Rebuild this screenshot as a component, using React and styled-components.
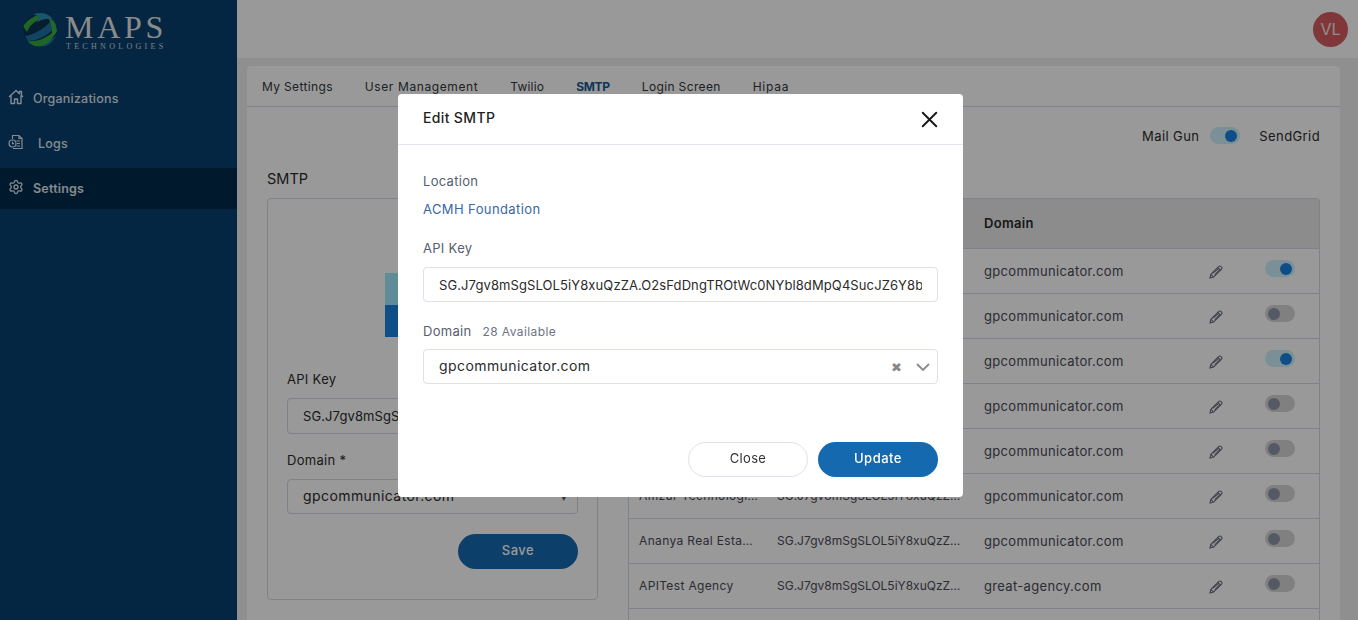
import React from "react";
import styled, { createGlobalStyle } from "styled-components";
import { Settings, X } from "lucide-react";

const API_KEY = "SG.J7gv8mSgSLOL5iY8xuQzZA.O2sFdDngTROtWc0NYbl8dMpQ4SucJZ6Y8bXk2";
const SHORT_KEY = "SG.J7gv8mSgSLOL5iY8xuQzZ…";
const TABS = [
  { label: "My Settings", spacing: 0.35 },
  { label: "User Management", spacing: 0.6 },
  { label: "Twilio", spacing: 0.2 },
  { label: "SMTP", spacing: -0.3 },
  { label: "Login Screen", spacing: 0.35 },
  { label: "Hipaa", spacing: 0.75 },
];
const ROWS = [
  { name: "", domain: "gpcommunicator.com", on: true },
  { name: "", domain: "gpcommunicator.com", on: false },
  { name: "", domain: "gpcommunicator.com", on: true },
  { name: "", domain: "gpcommunicator.com", on: false },
  { name: "", domain: "gpcommunicator.com", on: false },
  { name: "Amzur Technologi…", domain: "gpcommunicator.com", on: false },
  { name: "Ananya Real Esta…", domain: "gpcommunicator.com", on: false },
  { name: "APITest Agency", domain: "great-agency.com", on: false },
];

export default function App() {
  return (
    <>
      <GlobalStyle />
      <Shell>
        <Sidebar>
          <Logo>
            <Globe />
            <LogoText>
              <LogoName>MAPS</LogoName>
              <LogoSub>TECHNOLOGIES</LogoSub>
            </LogoText>
          </Logo>
          <Nav>
            <NavItem>
              <NavIcon><HomeIcon /></NavIcon>
              <NavLabel>Organizations</NavLabel>
            </NavItem>
            <NavItem>
              <NavIcon><LogsIcon /></NavIcon>
              <NavLabel $indent={5}>Logs</NavLabel>
            </NavItem>
            <NavItem $active>
              <NavIcon><Settings size={16} strokeWidth={2} /></NavIcon>
              <NavLabel>Settings</NavLabel>
            </NavItem>
          </Nav>
        </Sidebar>
        <Main>
          <TopBar>
            <Avatar>VL</Avatar>
          </TopBar>
          <Content>
            <Panel>
              <Tabs>
                {TABS.map((t) => (
                  <Tab key={t.label} $active={t.label === "SMTP"} $spacing={t.spacing}>{t.label}</Tab>
                ))}
              </Tabs>
              <PanelBody>
                <ProviderRow>
                  <ProviderLabel>Mail Gun</ProviderLabel>
                  <Toggle $on $lift={2} />
                  <ProviderLabel $gap>SendGrid</ProviderLabel>
                </ProviderRow>
                <SectionTitle>SMTP</SectionTitle>
                <Columns>
                  <FormCard>
                    <ProviderLogo />
                    <FormLabel>API Key</FormLabel>
                    <FormInput readOnly value={API_KEY} />
                    <FormLabel $top={17}>Domain *</FormLabel>
                    <FormSelect>
                      <SelectValue>gpcommunicator.com</SelectValue>
                      <Caret>▾</Caret>
                    </FormSelect>
                    <FormActions>
                      <PrimaryButton>Save</PrimaryButton>
                    </FormActions>
                  </FormCard>
                  <TableCard>
                    <Table>
                      <thead>
                        <tr>
                          <HeadCell $w={138}>Location</HeadCell>
                          <HeadCell $w={207}>API Key</HeadCell>
                          <HeadCell $w={215}>Domain</HeadCell>
                          <HeadCell $w={66} />
                          <HeadCell />
                        </tr>
                      </thead>
                      <tbody>
                        {ROWS.map((r, i) => (
                          <tr key={i}>
                            <Cell><NameText>{r.name}</NameText></Cell>
                            <Cell><KeyText>{SHORT_KEY}</KeyText></Cell>
                            <Cell>{r.domain}</Cell>
                            <Cell><PencilIcon /></Cell>
                            <Cell><Toggle $on={r.on} $lift={4} /></Cell>
                          </tr>
                        ))}
                        <tr>
                          <Cell colSpan={5} />
                        </tr>
                      </tbody>
                    </Table>
                  </TableCard>
                </Columns>
              </PanelBody>
            </Panel>
          </Content>
        </Main>
      </Shell>
      <Backdrop>
        <Modal>
          <ModalHeader>
            <ModalTitle>Edit SMTP</ModalTitle>
            <CloseIcon><X size={27} strokeWidth={1.8} /></CloseIcon>
          </ModalHeader>
          <ModalBody>
            <ModalLabel>Location</ModalLabel>
            <ModalValue>ACMH Foundation</ModalValue>
            <ModalLabel $top={19}>API Key</ModalLabel>
            <ModalInput readOnly value={API_KEY} />
            <ModalLabel $top={19}>
              Domain<Hint>28 Available</Hint>
            </ModalLabel>
            <SelectBox>
              <SelectValue>gpcommunicator.com</SelectValue>
              <ClearMark>✖</ClearMark>
              <Chevron />
            </SelectBox>
          </ModalBody>
          <ModalFooter>
            <GhostButton>Close</GhostButton>
            <PrimaryButton>Update</PrimaryButton>
          </ModalFooter>
        </Modal>
      </Backdrop>
    </>
  );
}

function Globe() {
  return (
    <svg width="36" height="36" viewBox="0 0 36 36">
      <defs>
        <clipPath id="ball"><circle cx="18" cy="18" r="17" /></clipPath>
      </defs>
      <g clipPath="url(#ball)">
        <rect width="36" height="36" fill="#0a3550" />
        <path d="M1 14C8 5 16 2 26 1l-4 6C14 8 8 12 5 20z" fill="#34a844" />
        <path d="M10 2c8-3 16-1 22 5-6-1-12 0-17 3 3-4 3-6-5-8z" fill="#2a8fb8" />
        <path d="M3 24c8-1 18-6 28-17l4 6C27 23 16 29 6 29z" fill="#1b72a0" />
        <path d="M26 5c5 3 9 8 9 14-2 4-4 6-6 8 2-6 1-15-3-22z" fill="#3fb044" />
        <path d="M6 29c8 1 17-2 25-9l-1 8c-6 7-16 9-23 3z" fill="#34a844" />
        <path d="M20 34c5-2 9-5 14-11l-2 9-8 4z" fill="#1b72a0" />
      </g>
    </svg>
  );
}

function HomeIcon() {
  return (
    <svg width="16" height="16" viewBox="0 0 16 16" fill="none" stroke="currentColor" strokeWidth="1.4" strokeLinejoin="round">
      <path d="M1 8l7-6.500L11.500 4.700V2.500h2v4L15 8" />
      <path d="M3 6.500V14.500h3.500V10h3v4.500H13V6.500" />
    </svg>
  );
}

function LogsIcon() {
  return (
    <svg width="16" height="16" viewBox="0 0 16 16" fill="none" stroke="currentColor" strokeWidth="1.2">
      <path d="M4.500 5V1.500h6.500l3 3v10H5" />
      <path d="M11 1.500v3h3M8.500 7h3.500M9 9.500h3M8.500 12h3.500" />
      <circle cx="4.500" cy="9.500" r="3.500" />
      <path d="M4.500 7.800v1.900h1.600" />
    </svg>
  );
}

function PencilIcon() {
  return (
    <PencilSvg width="14" height="14" viewBox="0 0 14 14" fill="none" stroke="currentColor" strokeWidth="1.1">
      <path d="M1 13l.9-3.600L9.900 1.400a1.400 1.400 0 0 1 2 0l.7.7a1.400 1.400 0 0 1 0 2l-8 8z" />
      <path d="M1.900 9.400l2.700 2.700M8.900 2.400l2.700 2.700M4 8.200 9.700 3.300M5.700 9.900l5-5" />
    </PencilSvg>
  );
}

function Chevron() {
  return (
    <svg width="14" height="8" viewBox="0 0 14 8" fill="none" stroke="#8a8a8a" strokeWidth="1.8">
      <path d="M1 1l6 6 6-6" />
    </svg>
  );
}

const GlobalStyle = createGlobalStyle`
  html, body {
    margin: 0;
    height: 100%;
    overflow: hidden;
    font-family: Inter, "Noto Sans", sans-serif;
    color: #2b2b2b;
  }
  * {
    box-sizing: border-box;
  }
`;

const Shell = styled.div`
  display: flex;
  height: 100vh;
  overflow: hidden;
`;

const Sidebar = styled.aside`
  width: 237px;
  flex-shrink: 0;
  background: #07406f;
  color: #dfe6ed;
`;

const Logo = styled.div`
  display: flex;
  align-items: flex-start;
  gap: 7px;
  height: 78px;
  padding: 12px 0 0 22px;
`;

const LogoText = styled.div`
  display: flex;
  flex-direction: column;
`;

const LogoName = styled.span`
  font: 32px/30px "Liberation Serif", serif;
  letter-spacing: 3.7px;
  color: #e8e8e8;
`;

const LogoSub = styled.span`
  padding-left: 1px;
  font: 8px/9px "Liberation Serif", serif;
  letter-spacing: 3.3px;
  color: #d4d8dc;
`;

const Nav = styled.nav`
  display: flex;
  flex-direction: column;
  gap: 4px;
`;

const NavItem = styled.div`
  display: flex;
  align-items: center;
  height: 41px;
  padding-left: 8px;
  background: ${(p) => (p.$active ? "#032a4c" : "transparent")};
  font-weight: ${(p) => (p.$active ? 600 : 500)};
`;

const NavIcon = styled.span`
  display: flex;
  width: 25px;
  margin-top: -4px;
`;

const NavLabel = styled.span`
  margin-left: ${(p) => p.$indent || 0}px;
  font-size: 12.5px;
  letter-spacing: 0.2px;
`;

const Main = styled.div`
  flex: 1;
  min-width: 0;
  display: flex;
  flex-direction: column;
  background: #eeeeee;
`;

const TopBar = styled.header`
  height: 58px;
  flex-shrink: 0;
  display: flex;
  align-items: center;
  justify-content: flex-end;
  padding-right: 10px;
  background: #ffffff;
`;

const Avatar = styled.div`
  width: 35px;
  height: 35px;
  border-radius: 50%;
  display: flex;
  align-items: center;
  justify-content: center;
  background: #d55d60;
  color: #f4e6e6;
  font-size: 16px;
`;

const Content = styled.div`
  flex: 1;
  padding: 8px 18px 0 10px;
`;

const Panel = styled.section`
  height: 100%;
  background: #ffffff;
  border-radius: 4px 4px 0 0;
`;

const Tabs = styled.nav`
  display: flex;
  align-items: center;
  gap: 32px;
  height: 41px;
  padding: 1px 15px 0;
  border-bottom: 1px solid #d5d8e8;
`;

const Tab = styled.span`
  font-size: 12px;
  letter-spacing: ${(p) => p.$spacing}px;
  font-weight: ${(p) => (p.$active ? 700 : 400)};
  color: ${(p) => (p.$active ? "#1c5a96" : "#33373d")};
`;

const PanelBody = styled.div`
  padding: 0 20px;
`;

const ProviderRow = styled.div`
  display: flex;
  align-items: center;
  justify-content: flex-end;
  height: 59px;
  gap: 11px;
`;

const ProviderLabel = styled.span`
  margin: 0 0 2px ${(p) => (p.$gap ? 8 : 0)}px;
  font-size: 13px;
  letter-spacing: 0.4px;
`;

const Toggle = styled.span`
  display: inline-flex;
  align-items: center;
  justify-content: ${(p) => (p.$on ? "flex-end" : "flex-start")};
  width: 30px;
  height: 17px;
  padding: 0 3px;
  margin-bottom: ${(p) => p.$lift}px;
  vertical-align: middle;
  border-radius: 9px;
  background: ${(p) => (p.$on ? "#cdf0fa" : "#d6d6d6")};
  &::after {
    content: "";
    width: 12px;
    height: 12px;
    border-radius: 50%;
    background: ${(p) => (p.$on ? "#1980df" : "#8e95aa")};
  }
`;

const SectionTitle = styled.h2`
  margin: 0;
  height: 32px;
  padding-top: 3px;
  font-size: 14.5px;
  line-height: 20px;
  font-weight: 400;
`;

const Columns = styled.div`
  display: flex;
  gap: 30px;
  align-items: flex-start;
`;

const FormCard = styled.div`
  width: 331px;
  height: 402px;
  padding: 0 19px;
  border: 1px solid #d5d8e8;
  border-radius: 4px;
`;

const ProviderLogo = styled.div`
  width: 95px;
  height: 64px;
  margin: 74px auto 33px;
  background: linear-gradient(#9de9ff 50%, #1984e3 50%);
`;

const FormLabel = styled.label`
  display: block;
  margin: ${(p) => p.$top || 0}px 0 10px;
  font-size: 13px;
  line-height: 18px;
  letter-spacing: 0.3px;
`;

const FormInput = styled.input`
  display: block;
  width: 100%;
  height: 36px;
  padding: 0 15px;
  border: 1px solid #d5d8e8;
  border-radius: 4px;
  background: #ffffff;
  font: 13px Inter, sans-serif;
  letter-spacing: 0.1px;
  color: #2b2b2b;
`;

const FormSelect = styled.div`
  display: flex;
  align-items: center;
  height: 35px;
  padding: 0 10px 0 15px;
  border: 1px solid #d5d8e8;
  border-radius: 4px;
`;

const Caret = styled.span`
  font-size: 11px;
  color: #555555;
`;

const FormActions = styled.div`
  display: flex;
  justify-content: flex-end;
  margin-top: 20px;
`;

const PrimaryButton = styled.button`
  width: 120px;
  height: 35px;
  padding: 0 0 3px;
  border: 0;
  border-radius: 18px;
  background: #156aaf;
  color: #ffffff;
  font: 500 13px Inter, sans-serif;
  letter-spacing: 0.5px;
`;

const GhostButton = styled(PrimaryButton)`
  border: 1px solid #dde1ec;
  background: #ffffff;
  color: #333333;
  font-weight: 400;
  letter-spacing: 0.3px;
`;

const TableCard = styled.div`
  width: 692px;
  border: 1px solid #d5d8e8;
  border-bottom: 0;
  border-radius: 4px 4px 0 0;
  overflow: hidden;
`;

const Table = styled.table`
  width: 100%;
  table-layout: fixed;
  border-collapse: collapse;
`;

const HeadCell = styled.th`
  width: ${(p) => (p.$w ? `${p.$w}px` : "auto")};
  height: 49px;
  padding: 0 0 0 10px;
  background: #e9e9e9;
  border-bottom: 1px solid #d5d8e8;
  text-align: left;
  font-size: 13px;
  font-weight: 600;
  letter-spacing: 0.3px;
`;

const Cell = styled.td`
  height: 45px;
  padding: 0 0 0 10px;
  border-bottom: 1px solid #d5d8e8;
  font-size: 13px;
  letter-spacing: 0.33px;
  white-space: nowrap;
  color: #4a4a55;
`;

const NameText = styled.div`
  font-size: 12px;
  letter-spacing: 0.35px;
`;

const KeyText = styled.div`
  font-size: 12px;
  letter-spacing: 0;
`;

const PencilSvg = styled.svg`
  display: block;
  margin: 2px 0 0 10px;
  color: #6a6f7c;
`;

const Backdrop = styled.div`
  position: fixed;
  inset: 0;
  background: rgba(0, 0, 0, 0.4);
`;

const Modal = styled.div`
  position: absolute;
  top: 94px;
  left: 398px;
  width: 565px;
  height: 403px;
  display: flex;
  flex-direction: column;
  background: #ffffff;
  border-radius: 4px;
`;

const ModalHeader = styled.div`
  display: flex;
  align-items: center;
  justify-content: space-between;
  height: 51px;
  padding: 0 20px 0 25px;
  border-bottom: 1px solid #e2e5f1;
`;

const ModalTitle = styled.h3`
  margin: 0 0 3px;
  font-size: 14px;
  font-weight: 500;
  letter-spacing: 0.35px;
  color: #1f1f1f;
`;

const CloseIcon = styled.span`
  display: flex;
  color: #1c1c1c;
`;

const ModalBody = styled.div`
  flex: 1;
  padding: 26px 25px 0;
`;

const ModalLabel = styled.div`
  margin-top: ${(p) => p.$top || 0}px;
  font-size: 13px;
  line-height: 20px;
  letter-spacing: 0.3px;
  color: #55606e;
`;

const ModalValue = styled.div`
  margin-top: 8px;
  font-size: 13px;
  line-height: 20px;
  letter-spacing: 0.4px;
  color: #3a66a6;
`;

const Hint = styled.span`
  margin-left: 11px;
  font-size: 12px;
  letter-spacing: 0.4px;
  color: #6d7480;
`;

const ModalInput = styled(FormInput)`
  height: 35px;
  margin-top: 9px;
  border-color: #dde0ee;
`;

const SelectBox = styled.div`
  display: flex;
  align-items: center;
  height: 35px;
  margin-top: 7px;
  padding: 0 7px 0 15px;
  border: 1px solid #dde0ee;
  border-radius: 4px;
`;

const SelectValue = styled.span`
  flex: 1;
  margin-top: -3px;
  font-size: 14px;
  letter-spacing: 0.42px;
`;

const ClearMark = styled.span`
  margin-right: 14px;
  font-size: 13px;
  color: #888888;
`;

const ModalFooter = styled.div`
  display: flex;
  justify-content: flex-end;
  gap: 10px;
  padding: 0 25px 20px;
`;
